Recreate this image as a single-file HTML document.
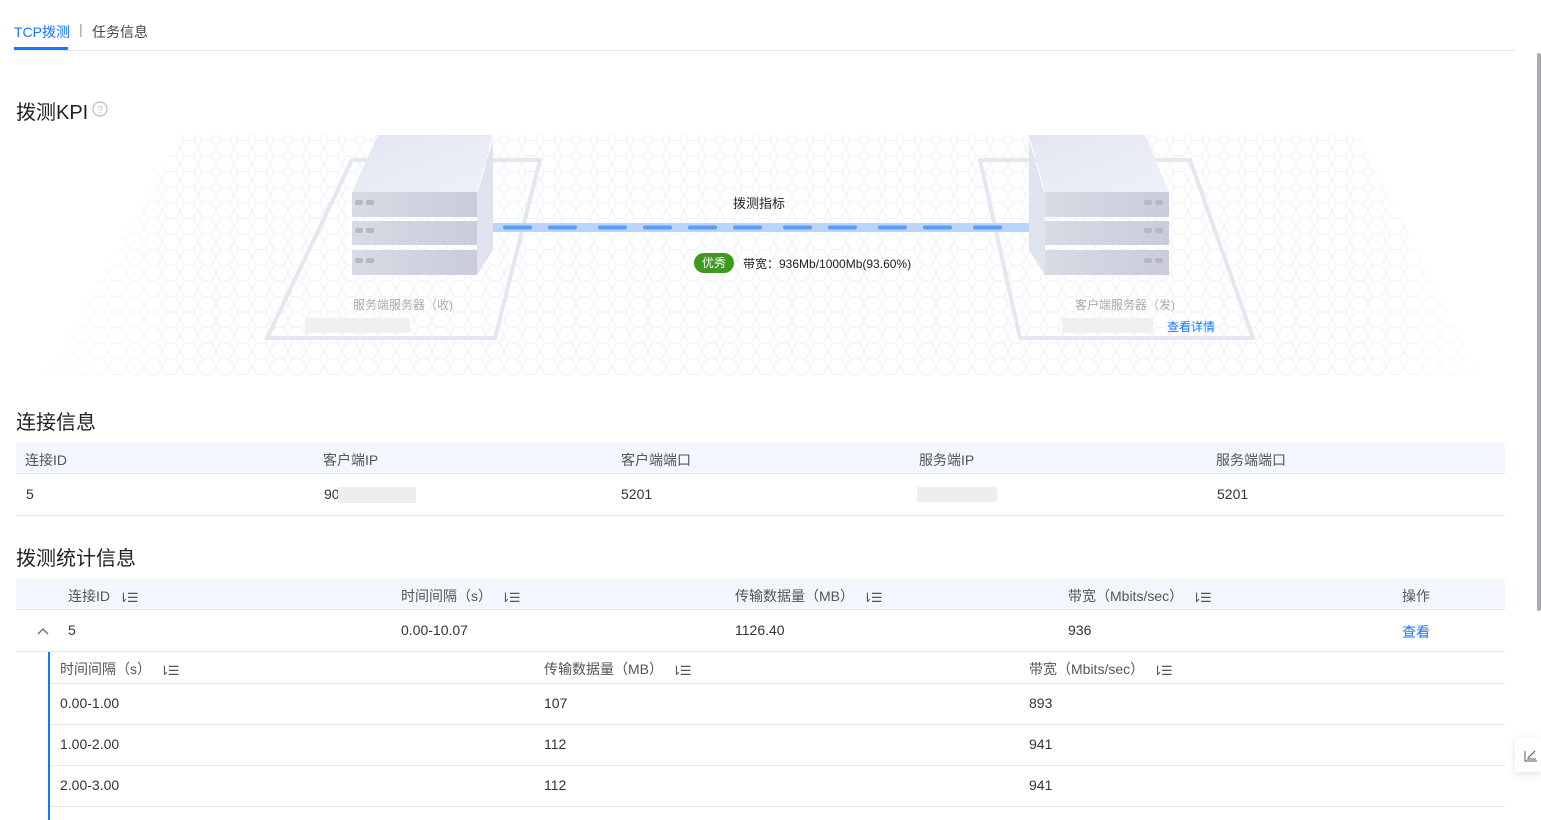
<!DOCTYPE html>
<html><head><meta charset="utf-8"><style>
*{margin:0;padding:0;box-sizing:border-box}
body{width:1541px;height:820px;overflow:hidden;background:#fff;font-family:"Liberation Sans","Noto Sans CJK SC",sans-serif;color:#333;position:relative}
.abs{position:absolute;white-space:nowrap}
.h{font-size:20px;color:#222}
.t14{font-size:14px}
.hd{color:#555;font-size:14px}
.so{display:inline-block;margin-left:8px;vertical-align:-1px;font-size:13px;letter-spacing:-2px}
</style></head><body>
<div class="abs" style="left:14px;top:22px;font-size:14px;color:#1677ff">TCP拨测</div>
<div class="abs" style="left:79px;top:21px;font-size:14px;color:#999">|</div>
<div class="abs" style="left:92px;top:22px;font-size:14px;color:#444">任务信息</div>
<div class="abs" style="left:14px;top:50px;width:1502px;height:1px;background:#e3e7ef"></div>
<div class="abs" style="left:14px;top:47px;width:54px;height:3px;background:#1677ff"></div>

<div class="abs h" style="left:16px;top:96px">拨测KPI</div>
<svg class="abs" style="left:92px;top:101px" width="16" height="16" viewBox="0 0 16 16"><circle cx="8" cy="8" r="7" fill="none" stroke="#bbb" stroke-width="1.2"/><text x="8" y="12" font-size="10" text-anchor="middle" fill="#bbb" font-family="Liberation Sans">?</text></svg>

<svg class="abs" style="left:0;top:130px" width="1541" height="250" viewBox="0 130 1541 250">
<defs>
<pattern id="hx" width="18" height="15.6" patternUnits="userSpaceOnUse">
<path d="M4.5 0 L13.5 0 L18 7.8 L13.5 15.6 L4.5 15.6 L0 7.8 Z" fill="none" stroke="#eef0f8" stroke-width="1"/>
</pattern>
<linearGradient id="fade" x1="0" y1="0" x2="1" y2="0"><stop offset="0" stop-color="#fff" stop-opacity="1"/><stop offset="0.12" stop-color="#fff" stop-opacity="0"/><stop offset="0.88" stop-color="#fff" stop-opacity="0"/><stop offset="1" stop-color="#fff" stop-opacity="1"/></linearGradient>
<linearGradient id="top" x1="0" y1="0" x2="1" y2="1"><stop offset="0" stop-color="#e2e6f0"/><stop offset="1" stop-color="#eef1f9"/></linearGradient>
<linearGradient id="fr" x1="0" y1="0" x2="1" y2="0"><stop offset="0" stop-color="#d8dbe6"/><stop offset="1" stop-color="#c9ccd9"/></linearGradient>
</defs>
<polygon points="180,135 1360,135 1480,375 45,375" fill="url(#hx)"/>
<rect x="0" y="130" width="1541" height="250" fill="url(#fade)"/>
<polygon points="352,160 540,160 495,338 267,338" fill="none" stroke="#e4e7ef" stroke-width="4"/>
<polygon points="980,160 1190,160 1253,338 1020,338" fill="none" stroke="#e4e7ef" stroke-width="4"/>
<rect x="488" y="223" width="550" height="9" fill="#b9d5fb"/>
<g stroke="#5c9cf3" stroke-width="4" stroke-linecap="round">
<line x1="505" y1="227.5" x2="530" y2="227.5"/><line x1="550" y1="227.5" x2="575" y2="227.5"/><line x1="600" y1="227.5" x2="625" y2="227.5"/><line x1="645" y1="227.5" x2="670" y2="227.5"/><line x1="690" y1="227.5" x2="715" y2="227.5"/><line x1="735" y1="227.5" x2="760" y2="227.5"/><line x1="785" y1="227.5" x2="810" y2="227.5"/><line x1="830" y1="227.5" x2="855" y2="227.5"/><line x1="880" y1="227.5" x2="905" y2="227.5"/><line x1="925" y1="227.5" x2="950" y2="227.5"/><line x1="975" y1="227.5" x2="1000" y2="227.5"/>
</g>
<g>
<polygon points="477,195 493,140 493,250 477,275" fill="#dfe3ee"/>
<rect x="352" y="192" width="125" height="25" fill="url(#fr)"/>
<rect x="352" y="221" width="125" height="24" fill="url(#fr)"/>
<rect x="352" y="250" width="125" height="25" fill="url(#fr)"/>
<polygon points="352,192 378,135 493,135 477,192" fill="url(#top)"/>
<g fill="#b4b7c4"><rect x="355" y="200" width="8" height="5" rx="2"/><rect x="366" y="200" width="8" height="5" rx="2"/><rect x="355" y="228" width="8" height="5" rx="2"/><rect x="366" y="228" width="8" height="5" rx="2"/><rect x="355" y="258" width="8" height="5" rx="2"/><rect x="366" y="258" width="8" height="5" rx="2"/></g>
</g>
<g>
<polygon points="1045,195 1029,140 1029,250 1045,275" fill="#dfe3ee"/>
<rect x="1045" y="192" width="124" height="25" fill="url(#fr)"/>
<rect x="1045" y="221" width="124" height="24" fill="url(#fr)"/>
<rect x="1045" y="250" width="124" height="25" fill="url(#fr)"/>
<polygon points="1045,192 1029,135 1145,135 1169,192" fill="url(#top)"/>
<g fill="#b4b7c4"><rect x="1144" y="200" width="8" height="5" rx="2"/><rect x="1155" y="200" width="8" height="5" rx="2"/><rect x="1144" y="228" width="8" height="5" rx="2"/><rect x="1155" y="228" width="8" height="5" rx="2"/><rect x="1144" y="258" width="8" height="5" rx="2"/><rect x="1155" y="258" width="8" height="5" rx="2"/></g>
</g>
<rect x="305" y="318" width="105" height="15" fill="#f0f0f2"/>
<rect x="1062" y="318" width="91" height="15" fill="#f0f0f2"/>
</svg>
<div class="abs" style="left:733px;top:193px;font-size:13px;color:#222">拨测指标</div>
<div class="abs" style="left:694px;top:253px;width:40px;height:20px;border-radius:10px;background:#3d9a1f;color:#fff;font-size:12px;line-height:20px;text-align:center">优秀</div>
<div class="abs" style="left:743px;top:255px;font-size:12px;color:#222">带宽：936Mb/1000Mb(93.60%)</div>
<div class="abs" style="left:353px;top:296px;font-size:12px;color:#aaa">服务端服务器（收)</div>
<div class="abs" style="left:1075px;top:296px;font-size:12px;color:#aaa">客户端服务器（发)</div>
<div class="abs" style="left:1167px;top:318px;font-size:12px;color:#1677ff">查看详情</div>

<div class="abs h" style="left:16px;top:406px">连接信息</div>
<div class="abs" style="left:16px;top:443px;width:1489px;height:31px;background:#f3f6fd;border-bottom:1px solid #e3e7ef"></div>
<div class="abs hd" style="left:25px;top:450px">连接ID</div>
<div class="abs hd" style="left:323px;top:450px">客户端IP</div>
<div class="abs hd" style="left:621px;top:450px">客户端端口</div>
<div class="abs hd" style="left:919px;top:450px">服务端IP</div>
<div class="abs hd" style="left:1216px;top:450px">服务端端口</div>
<div class="abs t14" style="left:26px;top:486px">5</div>
<div class="abs t14" style="left:324px;top:486px">90</div>
<div class="abs" style="left:338px;top:487px;width:78px;height:16px;background:#eee"></div>
<div class="abs t14" style="left:621px;top:486px">5201</div>
<div class="abs" style="left:917px;top:487px;width:80px;height:15px;background:#eee"></div>
<div class="abs t14" style="left:1217px;top:486px">5201</div>
<div class="abs" style="left:16px;top:515px;width:1489px;height:1px;background:#e3e7ef"></div>

<div class="abs h" style="left:16px;top:542px">拨测统计信息</div>
<div class="abs" style="left:16px;top:579px;width:1489px;height:31px;background:#f3f6fd;border-bottom:1px solid #e3e7ef"></div>
<div class="abs hd" style="left:68px;top:586px">连接ID<span class="so">⇂☰</span></div>
<div class="abs hd" style="left:401px;top:586px">时间间隔（s）<span class="so">⇂☰</span></div>
<div class="abs hd" style="left:735px;top:586px">传输数据量（MB）<span class="so">⇂☰</span></div>
<div class="abs hd" style="left:1068px;top:586px">带宽（Mbits/sec）<span class="so">⇂☰</span></div>
<div class="abs hd" style="left:1402px;top:586px">操作</div>
<svg class="abs" style="left:37px;top:627px" width="12" height="8"><path d="M1 7 L6 2 L11 7" fill="none" stroke="#666" stroke-width="1.3"/></svg>
<div class="abs t14" style="left:68px;top:622px">5</div>
<div class="abs t14" style="left:401px;top:622px">0.00-10.07</div>
<div class="abs t14" style="left:735px;top:622px">1126.40</div>
<div class="abs t14" style="left:1068px;top:622px">936</div>
<div class="abs t14" style="left:1402px;top:622px;color:#1677ff">查看</div>
<div class="abs" style="left:16px;top:651px;width:1489px;height:1px;background:#e3e7ef"></div>
<div class="abs" style="left:48px;top:652px;width:2px;height:168px;background:#1677ff"></div>
<div class="abs" style="left:50px;top:683px;width:1455px;height:1px;background:#e3e7ef"></div>
<div class="abs hd" style="left:60px;top:659px">时间间隔（s）<span class="so">⇂☰</span></div>
<div class="abs hd" style="left:544px;top:659px">传输数据量（MB）<span class="so">⇂☰</span></div>
<div class="abs hd" style="left:1029px;top:659px">带宽（Mbits/sec）<span class="so">⇂☰</span></div>
<div class="abs t14" style="left:60px;top:695px">0.00-1.00</div><div class="abs t14" style="left:544px;top:695px">107</div><div class="abs t14" style="left:1029px;top:695px">893</div>
<div class="abs" style="left:50px;top:724px;width:1455px;height:1px;background:#e3e7ef"></div>
<div class="abs t14" style="left:60px;top:736px">1.00-2.00</div><div class="abs t14" style="left:544px;top:736px">112</div><div class="abs t14" style="left:1029px;top:736px">941</div>
<div class="abs" style="left:50px;top:765px;width:1455px;height:1px;background:#e3e7ef"></div>
<div class="abs t14" style="left:60px;top:777px">2.00-3.00</div><div class="abs t14" style="left:544px;top:777px">112</div><div class="abs t14" style="left:1029px;top:777px">941</div>
<div class="abs" style="left:50px;top:806px;width:1455px;height:1px;background:#e3e7ef"></div>

<div class="abs" style="left:1537px;top:53px;width:4px;height:558px;background:#aaaab0;border-radius:2px"></div>
<div class="abs" style="left:1515px;top:738px;width:26px;height:34px;background:#fff;box-shadow:0 2px 8px rgba(0,0,0,0.12)"></div>
<svg class="abs" style="left:1524px;top:749px" width="14" height="13"><path d="M1 2 V12 H13 M4 9 L11 2 M3 10 H12" fill="none" stroke="#555" stroke-width="1"/></svg>
</body></html>
